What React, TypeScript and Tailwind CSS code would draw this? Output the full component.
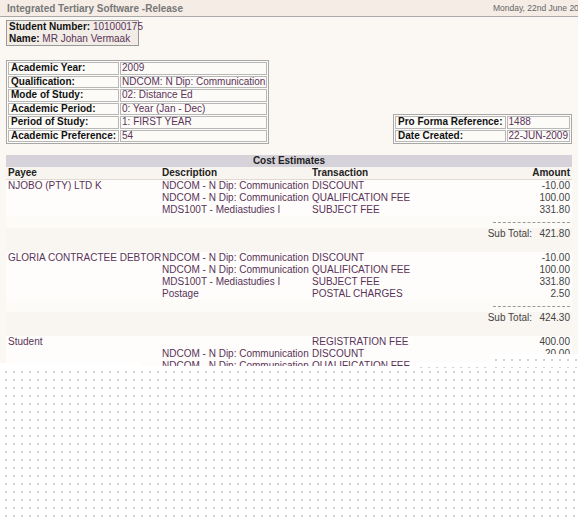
import React from "react";

const V = "text-[#5a3358]";

function InfoTable({ rows, labelW, valueW }: { rows: [string, string][]; labelW: number; valueW: number }) {
  return (
    <table className="border border-[#a8a8a8] border-separate border-spacing-[1px] bg-[#fdfbf8]">
      <tbody>
        {rows.map(([l, v]) => (
          <tr key={l}>
            <td style={{ width: labelW, minWidth: labelW }} className="border border-[#b8b8b8] h-[12.5px] leading-[10px] px-[2px] font-bold text-[#111] text-[10px] whitespace-nowrap">
              {l}
            </td>
            <td style={{ width: valueW, minWidth: valueW }} className={`border border-[#b8b8b8] h-[12.5px] leading-[10px] px-[1px] text-[10px] whitespace-nowrap ${V}`}>
              {v}
            </td>
          </tr>
        ))}
      </tbody>
    </table>
  );
}

type Row = { p?: string; d?: string; t?: string; a?: string; kind?: "dash" | "sub" | "blank"; sub?: string };

const rows: Row[] = [
  { p: "NJOBO (PTY) LTD K", d: "NDCOM - N Dip: Communication", t: "DISCOUNT", a: "-10.00" },
  { d: "NDCOM - N Dip: Communication", t: "QUALIFICATION FEE", a: "100.00" },
  { d: "MDS100T - Mediastudies I", t: "SUBJECT FEE", a: "331.80" },
  { kind: "dash" },
  { kind: "sub", sub: "421.80" },
  { kind: "blank" },
  { p: "GLORIA CONTRACTEE DEBTOR", d: "NDCOM - N Dip: Communication", t: "DISCOUNT", a: "-10.00" },
  { d: "NDCOM - N Dip: Communication", t: "QUALIFICATION FEE", a: "100.00" },
  { d: "MDS100T - Mediastudies I", t: "SUBJECT FEE", a: "331.80" },
  { d: "Postage", t: "POSTAL CHARGES", a: "2.50" },
  { kind: "dash" },
  { kind: "sub", sub: "424.30" },
  { kind: "blank" },
  { p: "Student", t: "REGISTRATION FEE", a: "400.00" },
  { d: "NDCOM - N Dip: Communication", t: "DISCOUNT", a: "-20.00" },
  { d: "NDCOM - N Dip: Communication", t: "QUALIFICATION FEE", a: "100.00" },
];

const grid = "grid grid-cols-[154px_150px_1fr_90px]";

export default function App() {
  const dots =
    "bg-white bg-[radial-gradient(circle,#d2d2d2_0.8px,transparent_1.2px)] bg-[size:8px_8px] bg-[position:2px_2px]";
  return (
    <div className="relative w-[578px] h-[523px] overflow-hidden bg-white font-['Liberation_Sans',Arial,sans-serif]">
      <div className="h-[366px] overflow-hidden bg-[#fbf8f4]">
        {/* Header */}
        <div className="h-[17px] flex items-center justify-between bg-[#f4ece5] border-b border-[#a9a9a9] pl-[7px]">
          <span className="text-[10px] font-bold text-[#777]">Integrated Tertiary Software -Release</span>
          <span className="text-[8.5px] text-[#666] whitespace-nowrap w-[85px] overflow-hidden">Monday, 22nd June 2009</span>
        </div>

        {/* Student box */}
        <div className="ml-[6px] mt-[3px] w-[133px] h-[26px] border border-[#999] bg-[#f1ece6] px-[2px] text-[10px] leading-[12px]">
          <div className="whitespace-nowrap">
            <b className="text-[#111]">Student Number:</b> <span className={V}>101000175</span>
          </div>
          <div className="whitespace-nowrap">
            <b className="text-[#111]">Name:</b> <span className={V}>MR Johan Vermaak</span>
          </div>
        </div>

        {/* Info tables */}
        <div className="flex items-end justify-between ml-[6px] mr-[6px] mt-[14px]">
          <InfoTable
            labelW={97}
            valueW={141}
            rows={[
              ["Academic Year:", "2009"],
              ["Qualification:", "NDCOM: N Dip: Communication"],
              ["Mode of Study:", "02: Distance Ed"],
              ["Academic Period:", "0: Year (Jan - Dec)"],
              ["Period of Study:", "1: FIRST YEAR"],
              ["Academic Preference:", "54"],
            ]}
          />
          <InfoTable
            labelW={100}
            valueW={56}
            rows={[
              ["Pro Forma Reference:", "1488"],
              ["Date Created:", "22-JUN-2009"],
            ]}
          />
        </div>

        {/* Cost estimates */}
        <div className="mx-[6px] mt-[11px] text-[10px]">
          <div className="h-[12px] leading-[12px] bg-[#d6d2da] text-center font-bold text-[#222]">Cost Estimates</div>
          <div className={`${grid} h-[13px] leading-[12px] font-bold text-[#222] border-b border-[#e2d9d0] bg-[#f8f4ef]`}>
            <span className="pl-[2px]">Payee</span>
            <span className="pl-[2px]">Description</span>
            <span className="pl-[2px]">Transaction</span>
            <span className="text-right pr-[2px]">Amount</span>
          </div>
          {rows.map((r, i) => {
            if (r.kind === "blank") return <div key={i} className="h-[12px] bg-[#f9f5f0]" />;
            if (r.kind === "dash")
              return (
                <div key={i} className="h-[12px] flex justify-end items-center pr-[2px] bg-[#fdfbf8]">
                  <div className="w-[77px] border-t border-dashed border-[#9a9a9a]" />
                </div>
              );
            if (r.kind === "sub")
              return (
                <div key={i} className="h-[12px] leading-[12px] flex justify-end pr-[2px] text-[#444] bg-[#f9f5f0]">
                  <span>Sub Total:</span>
                  <span className="w-[38px] text-right">{r.sub}</span>
                </div>
              );
            return (
              <div key={i} className={`${grid} h-[12px] leading-[12px] whitespace-nowrap bg-[#fefdfb]`}>
                <span className={`pl-[2px] ${V}`}>{r.p}</span>
                <span className={`pl-[2px] ${V}`}>{r.d}</span>
                <span className={`pl-[2px] ${V}`}>{r.t}</span>
                <span className="text-right pr-[2px] text-[#444]">{r.a}</span>
              </div>
            );
          })}
        </div>
      </div>

      {/* torn-paper dotted area */}
      <div className={`h-[157px] ${dots}`} />
      <div className={`absolute left-[490px] top-[354px] w-[88px] h-[14px] ${dots}`} />
      <div className={`absolute left-[415px] top-[362px] w-[75px] h-[6px] ${dots}`} />
      <div className={`absolute left-0 top-[363px] w-[140px] h-[4px] ${dots}`} />
    </div>
  );
}
